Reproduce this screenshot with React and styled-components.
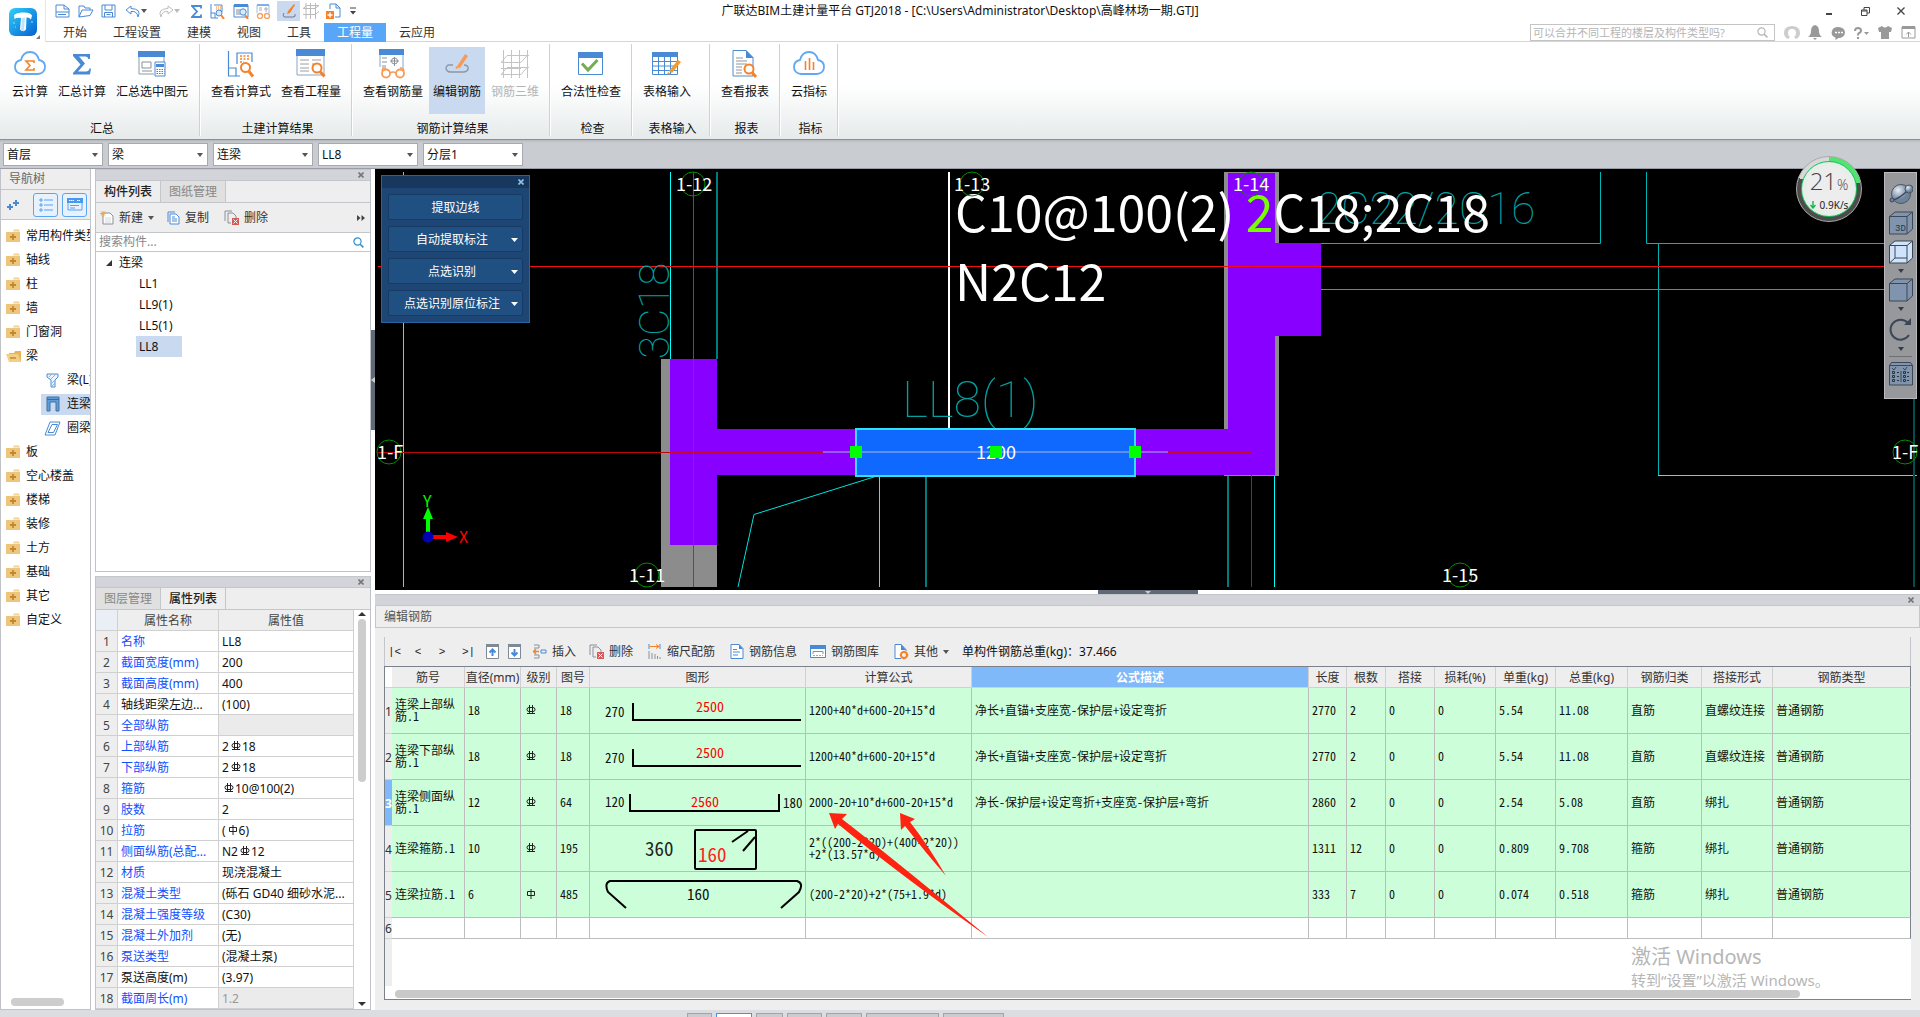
import React from 'react'
import styled, { createGlobalStyle } from 'styled-components'

const GlobalStyle = createGlobalStyle`
  * { box-sizing: border-box; }
  body {
    margin: 0;
    color: #111;
    background: #fff;
    font-family: 'Noto Sans', 'Noto Sans CJK SC', sans-serif;
    font-size: 12px;
    line-height: 20px;
    overflow: hidden;
  }
  button, input, select {
    font: inherit;
    color: inherit;
    margin: 0;
    padding: 0;
    border: 0;
    background: none;
  }
  svg { display: block; flex: none; }
`

const Page = styled.div`
  height: 100vh;
  display: flex;
  flex-direction: column;
`

/* ---------- header ---------- */

const Header = styled.header`
  display: flex;
  height: 42px;
`

const LogoBox = styled.div`
  position: relative;
  width: 46px;
  padding: 8px 0 0 9px;
  border-right: 1px solid #e6e6e6;
`

const LogoCorner = styled.svg`
  position: absolute;
  right: 5px;
  bottom: 3px;
`

const HeaderMain = styled.div`
  flex: 1;
  border-bottom: 1px solid #d4d5d6;
`

const TitleRow = styled.div`
  display: grid;
  grid-template-columns: 1fr auto 1fr;
  align-items: center;
  height: 22px;
`

const QuickBar = styled.div`
  display: flex;
  align-items: center;
  gap: 6px;
  padding-left: 8px;
`

const QuickButton = styled.button`
  display: flex;
  align-items: center;
  justify-content: center;
  width: ${({ $w = 17 }) => $w}px;
  height: 20px;
  background: ${({ $active }) => ($active ? '#c9d9ef' : 'none')};
`

const WindowTitle = styled.div`
  white-space: nowrap;
  padding-right: 46px;
`

const WindowButtons = styled.div`
  display: flex;
  justify-content: flex-end;
  gap: 20px;
  padding-right: 11px;
`

const TabRow = styled.div`
  display: flex;
  justify-content: space-between;
  height: 19px;
  margin-top: 1px;
`

const Tabs = styled.nav`
  display: flex;
  padding-left: 4px;
`

const Tab = styled.button`
  padding: 0 13px;
  line-height: 19px;
  color: ${({ $active }) => ($active ? '#fff' : '#333')};
  background: ${({ $active }) => ($active ? '#58a6f8' : 'none')};
`

const HelpArea = styled.div`
  display: flex;
  align-items: center;
  gap: 7px;
  padding-right: 4px;
`

const HelpSearch = styled.label`
  display: flex;
  align-items: center;
  width: 245px;
  height: 17px;
  padding: 0 6px 0 2px;
  margin-right: 2px;
  border: 1px solid #c4c4c4;
  input {
    flex: 1;
    min-width: 0;
    font-size: 11px;
    line-height: 15px;
    outline: 0;
  }
  input::placeholder { color: #b5b5b5; opacity: 1; }
`

const IconButton = styled.button`
  display: flex;
  align-items: center;
  justify-content: center;
  min-width: 16px;
`

/* ---------- ribbon ---------- */

const Ribbon = styled.div`
  display: flex;
  height: 98px;
  padding-left: 2px;
  background: linear-gradient(#fff 45%, #e6eaeb);
  border-bottom: 1px solid #8a8f93;
`

const Group = styled.section`
  display: flex;
  flex-direction: column;
  min-width: ${({ $min = 0 }) => $min}px;
  margin: 2px 0 3px;
  padding: 3px 6px 0;
  border-right: 1px solid #cfd2d4;
  box-shadow: 1px 0 0 #fff;
  & + & { margin-left: 1px; }
`

const GroupTools = styled.div`
  display: flex;
  gap: 2px;
  flex: 1;
`

const GroupLabel = styled.div`
  padding-left: 3px;
  text-align: center;
  line-height: 15px;
`

const Tool = styled.button`
  display: flex;
  flex-direction: column;
  align-items: center;
  gap: 3px;
  height: 67px;
  padding: 2px 4px 0;
  white-space: nowrap;
  color: ${({ $muted }) => ($muted ? '#b4b4b4' : '#111')};
  background: ${({ $active }) => ($active ? '#c9d9ef' : 'none')};
`

const ComboBar = styled.div`
  display: flex;
  gap: 5px;
  height: 29px;
  padding: 3px 3px 0;
  background: linear-gradient(#b5b8bc, #c9ccd1 3px);
  border-bottom: 1px solid #9a9da5;
`

const Combo = styled.label`
  position: relative;
  width: 100px;
  height: 23px;
  border: 1px solid #a7a9ad;
  background: #fff;
  select {
    width: 100%;
    height: 21px;
    padding-left: 3px;
    appearance: none;
    outline: 0;
  }
  svg {
    position: absolute;
    right: 4px;
    top: 9px;
    pointer-events: none;
  }
`

/* ---------- docks ---------- */

const Main = styled.main`
  flex: 1;
  min-height: 0;
  display: flex;
`

const NavPanel = styled.aside`
  display: flex;
  flex-direction: column;
  width: 91px;
  margin-right: 4px;
  border: 1px solid #bfc2c8;
  border-top: 0;
`

const NavTitle = styled.div`
  height: 21px;
  padding-left: 8px;
  color: #666;
  background: #eee;
  border-bottom: 1px solid #c3c6cb;
`

const NavTools = styled.div`
  display: flex;
  align-items: center;
  gap: 4px;
  height: 30px;
  padding-left: 4px;
  background: #eee;
  border-bottom: 1px solid #c3c6cb;
`

const NavExpand = styled(IconButton)`
  margin-right: 8px;
`

const NavToggle = styled.button`
  display: flex;
  align-items: center;
  justify-content: center;
  width: 25px;
  height: 24px;
  border: 1px solid #5ba5f5;
  border-radius: 3px;
  background: #e8f2fd;
`

const NavList = styled.ul`
  flex: 1;
  margin: 0;
  padding: 4px 0 0;
  list-style: none;
  overflow: hidden;
`

const NavItem = styled.li`
  display: flex;
  align-items: center;
  height: 24px;
  padding-left: ${({ $child }) => ($child ? 40 : 5)}px;
`

const NavButton = styled.button`
  flex: 1;
  display: flex;
  align-items: center;
  gap: ${({ $child }) => ($child ? 6 : 5)}px;
  height: 21px;
  padding-left: ${({ $child }) => ($child ? 3 : 0)}px;
  white-space: nowrap;
  background: ${({ $active }) => ($active ? '#c9d9ef' : 'none')};
`

const NavScroll = styled.div`
  width: 53px;
  height: 8px;
  margin: 0 0 3px 10px;
  border-radius: 4px;
  background: #cdcdcd;
`

const MiddleColumn = styled.div`
  display: flex;
  flex-direction: column;
  gap: 4px;
  width: 276px;
`

const Panel = styled.section`
  flex: ${({ $grow }) => ($grow ? '1 1 0' : 'none')};
  min-height: 0;
  border: 1px solid #bfc2c8;
  border-top: 0;
  background: #fff;
`

const Strip = styled.div`
  display: flex;
  justify-content: flex-end;
  align-items: center;
  height: 12px;
  padding-right: 6px;
  background: #d3d4d9;
  border-top: 1px solid #c3c6cb;
  border-bottom: 1px solid #c3c6cb;
`

const PanelTabs = styled.div`
  display: flex;
  height: 22px;
  background: #eee;
  border-bottom: 1px solid #c3c6cb;
`

const PanelTab = styled.button`
  padding: 0 8px;
  line-height: 21px;
  border-right: 1px solid #c3c6cb;
  color: ${({ $active }) => ($active ? '#222' : '#888')};
  font-weight: ${({ $active }) => ($active ? 500 : 400)};
  background: ${({ $active }) => ($active ? '#eee' : '#e0e0e0')};
`

const PanelTools = styled.div`
  display: flex;
  align-items: center;
  justify-content: space-between;
  height: 30px;
  padding: 0 1px 0 4px;
  background: #eee;
  border-bottom: 1px solid #c3c6cb;
`

const ToolSet = styled.div`
  display: flex;
  align-items: center;
`

const TextButton = styled.button`
  display: flex;
  align-items: center;
  gap: 5px;
  margin-right: ${({ $gap = 15 }) => $gap}px;
  white-space: nowrap;
  color: #333;
`

const SearchRow = styled.label`
  display: flex;
  align-items: center;
  height: 19px;
  padding: 0 6px 0 3px;
  border-bottom: 1px solid #c3c6cb;
  input {
    flex: 1;
    height: 18px;
    outline: 0;
  }
  input::placeholder { color: #888; opacity: 1; }
`

const Tree = styled.ul`
  margin: 0;
  padding: 0;
  list-style: none;
`

const TreeRow = styled.li`
  display: flex;
  align-items: center;
  gap: 7px;
  height: 21px;
  padding-left: ${({ $child }) => ($child ? 40 : 10)}px;
`

const TreeButton = styled.button`
  height: 21px;
  padding: 0 ${({ $child }) => ($child ? 3 : 0)}px;
  min-width: 46px;
  text-align: left;
  background: ${({ $active }) => ($active ? '#c9d9ef' : 'none')};
`

const PropBody = styled.div`
  display: grid;
  grid-template-columns: minmax(0, 1fr) 16px;
`

const PropTable = styled.table`
  width: 100%;
  table-layout: fixed;
  border-collapse: separate;
  border-spacing: 0;
  th, td {
    height: 21px;
    padding: 2px 0 0 3px;
    line-height: 18px;
    border-right: 1px solid #d0d0d0;
    border-bottom: 1px solid #d0d0d0;
    overflow: hidden;
    white-space: nowrap;
    text-overflow: ellipsis;
  }
  th {
    padding-left: 0;
    font-weight: 400;
    color: #444;
    background: #eee;
  }
  thead th:first-child { background: #eaeff6; }
`

const PropName = styled.td`
  color: ${({ $dark }) => ($dark ? '#111' : '#0f50ff')};
`

const PropValue = styled.td`
  color: ${({ $locked }) => ($locked ? '#999' : '#111')};
  background: ${({ $locked }) => ($locked ? '#ebebeb' : '#fff')};
  svg {
    display: inline-block;
    vertical-align: 0;
    margin: 0 1px 0 2px;
  }
`

const VScroll = styled.div`
  display: flex;
  flex-direction: column;
  align-items: center;
  justify-content: space-between;
  padding: 2px 0 3px;
`

const VTrack = styled.div`
  flex: 1;
  margin: 3px 0 0;
`

const VThumb = styled.div`
  width: 8px;
  height: 163px;
  border-radius: 4px;
  background: #cdcdcd;
`

const VSplitter = styled.div`
  display: flex;
  flex-direction: column;
  width: 4px;
  padding-top: 161px;
`

const HSplitter = styled.div`
  display: flex;
  justify-content: center;
  height: 4px;
`

const Handle = styled.div`
  display: flex;
  align-items: center;
  justify-content: center;
  width: ${({ $vertical }) => ($vertical ? 4 : 100)}px;
  height: ${({ $vertical }) => ($vertical ? 100 : 4)}px;
  background: #5f6a76;
`

/* ---------- viewport ---------- */

const Work = styled.div`
  flex: 1;
  min-width: 0;
  display: flex;
  flex-direction: column;
`

const Viewport = styled.div`
  position: relative;
  flex: 421 1 0;
  min-height: 0;
  background: #000;
`

const Drawing = styled.svg`
  width: 100%;
  height: 100%;
  text {
    font-family: 'Noto Sans CJK SC', sans-serif;
  }
  .cad {
    font-family: Roboto, sans-serif;
    font-weight: 100;
  }
`

const FloatPanel = styled.div`
  position: absolute;
  left: 6px;
  top: 6px;
  width: 149px;
  border: 1px solid #2a64a0;
  background: #1d4674;
`

const FloatHead = styled.div`
  display: flex;
  justify-content: flex-end;
  align-items: center;
  height: 12px;
  padding-right: 5px;
  background: #17375c;
`

const FloatBody = styled.div`
  display: flex;
  flex-direction: column;
  gap: 6px;
  padding: 6px;
`

const FloatButton = styled.button`
  display: flex;
  align-items: center;
  height: 26px;
  padding: 1px 4px 0;
  border: 1px solid #163a63;
  border-radius: 2px;
  color: #fff;
  background: #205081;
  span {
    flex: 1;
    white-space: nowrap;
  }
`

const ViewBar = styled.div`
  position: absolute;
  right: 3px;
  top: 3px;
  display: flex;
  flex-direction: column;
  align-items: center;
  width: 33px;
  height: 227px;
  padding-top: 9px;
  gap: 5px;
  background: #96989c;
  border: 1px solid #b9bbbe;
`

const ViewDivider = styled.div`
  width: 23px;
  height: 1px;
  background: #6c6f75;
`

const NetBadge = styled.div`
  position: absolute;
  right: 58px;
  top: -13px;
  width: 66px;
  height: 66px;
  border-radius: 50%;
  padding: 4px;
  border: 1px solid #aaa;
  background: conic-gradient(#52e370 0 78deg, #4c4c4c 78deg 290deg, #d6d8da 290deg);
`

const NetDial = styled.div`
  display: flex;
  flex-direction: column;
  align-items: center;
  height: 56px;
  padding-top: 7px;
  border-radius: 50%;
  border: 1px solid #14c25a;
  background: radial-gradient(#ededed 55%, #c9f3d3);
`

const NetPercent = styled.div`
  color: #444;
  font-family: 'Open Sans', sans-serif;
  font-weight: 300;
  font-size: 24px;
  line-height: 24px;
  small { font-size: 14px; }
`

const NetSpeed = styled.div`
  display: flex;
  align-items: center;
  gap: 4px;
  font-size: 10px;
  line-height: 16px;
  color: #222;
`

/* ---------- rebar editor ---------- */

const Dock = styled.section`
  flex: 416 1 0;
  min-height: 0;
  display: flex;
  flex-direction: column;
  background: #eee;
`

const DockTitle = styled.div`
  height: 22px;
  padding-left: 8px;
  line-height: 21px;
  color: #555;
  border: 1px solid #c3c6cb;
  border-top: 0;
`

const DockBody = styled.div`
  flex: 1;
  min-height: 0;
  display: flex;
  flex-direction: column;
  margin: 9px 9px 10px;
`

const DockTools = styled.div`
  display: flex;
  align-items: center;
  height: 29px;
  padding-left: 3px;
  border-left: 1px solid #c3c6cb;
  border-right: 1px solid #c3c6cb;
`

const StepButton = styled.button`
  width: 12px;
  margin-right: ${({ $gap = 12 }) => $gap}px;
  font-family: 'Liberation Mono', monospace;
  font-size: 11px;
  white-space: nowrap;
  color: #222;
`

const TableFrame = styled.div`
  position: relative;
  flex: 1;
  min-height: 0;
  display: flex;
  flex-direction: column;
  border: 1px solid #7c828c;
  border-right-width: 0;
  background: #fff;
`

const RebarTable = styled.table`
  width: 100%;
  table-layout: fixed;
  border-collapse: separate;
  border-spacing: 0;
  th, td {
    border-right: 1px solid #bdbdbd;
    border-bottom: 1px solid #bdbdbd;
    overflow: hidden;
  }
  tr > :last-child { border-right-color: #7c828c; }
  th {
    height: 21px;
    padding: 2px 0 0;
    font-weight: 400;
    line-height: 18px;
    color: #333;
    white-space: nowrap;
    background: #eee;
    border-color: #d0d0d0;
  }
  th:first-child { border-right: 0; }
  thead th:first-child { background: #fff; }
`

const HeadCell = styled.th`
  && {
    color: ${({ $active }) => ($active ? '#fff' : '#333')};
    font-weight: ${({ $active }) => ($active ? 700 : 400)};
    background: ${({ $active }) => ($active ? '#80b9fa' : '#eee')};
  }
`

const RowHead = styled.th`
  && {
    overflow: visible;
    color: ${({ $active }) => ($active ? '#fff' : '#333')};
    font-weight: ${({ $active }) => ($active ? 700 : 400)};
    background: ${({ $active }) => ($active ? '#80b9fa' : '#eee')};
  }
`

const Cell = styled.td`
  height: ${({ $empty }) => ($empty ? 21 : 46)}px;
  padding: 0 0 ${({ $flush, $empty }) => ($flush || $empty ? 0 : 2)}px ${({ $pad = 3 }) => $pad}px;
  line-height: 12px;
  font-family: 'Noto Sans Mono CJK SC', 'Noto Sans CJK SC', sans-serif;
  white-space: ${({ $wrap }) => ($wrap ? 'pre-line' : 'nowrap')};
  background: ${({ $empty }) => ($empty ? '#fff' : '#ccffd9')};
  svg text { font-family: 'Noto Sans Mono CJK SC', 'Noto Sans CJK SC', sans-serif; }
`

const RowGutter = styled.div`
  flex: 1;
  width: 7px;
  margin-bottom: 4px;
  background: #eee;
`

const HScroll = styled.div`
  height: 8px;
  margin: 0 111px 1px 10px;
  border-radius: 4px;
  background: #c9c9c9;
`

const Marks = styled.svg`
  position: absolute;
  left: 421px;
  top: 133px;
  pointer-events: none;
`

const Watermark = styled.div`
  position: absolute;
  left: 1246px;
  top: 277px;
  color: #b6b6b6;
  white-space: nowrap;
  pointer-events: none;
  strong {
    display: block;
    font-weight: 400;
    font-size: 20px;
    line-height: 26px;
  }
  span {
    font-size: 15px;
    line-height: 20px;
  }
`

const StatusBar = styled.footer`
  display: flex;
  gap: 4px;
  height: 7px;
  padding: 3px 0 0 687px;
  background: #dcdde0;
  overflow: hidden;
`

const StatusButton = styled.button`
  width: ${({ $w }) => $w}px;
  height: 20px;
  border: 1px solid ${({ $active }) => ($active ? '#3a96f5' : '#a2a4a8')};
  background: ${({ $active }) => ($active ? '#fff' : '#cbccd0')};
`

/* ---------- icons ---------- */

const Svg = ({ w, h = w, children }) => (
  <svg width={w} height={h} viewBox={`0 0 ${w} ${h}`} fill='none' aria-hidden='true'>
    {children}
  </svg>
)

const Caret = ({ color = '#555', up, w = 7 }) => (
  <Svg w={w} h={4}>
    <path d={up ? `M0 4h${w}L${w / 2} 0z` : `M0 0h${w}L${w / 2} 4z`} fill={color} />
  </Svg>
)

const CloseIcon = ({ color = '#777' }) => (
  <Svg w={6}><path d='M.5.5l5 5M5.5.5l-5 5' stroke={color} strokeWidth='1.6' /></Svg>
)

const Magnifier = ({ color }) => (
  <Svg w={11}>
    <circle cx='4.5' cy='4.5' r='3.6' stroke={color} strokeWidth='1.2' />
    <path d='M7.2 7.2l3.2 3.2' stroke={color} strokeWidth='1.6' />
  </Svg>
)

const Logo = () => (
  <Svg w={29}>
    <defs>
      <linearGradient id='logo' x1='0' y1='0' x2='1' y2='1'>
        <stop offset='0' stopColor='#2fd0fb' />
        <stop offset='1' stopColor='#075fd0' />
      </linearGradient>
    </defs>
    <rect x='0' y='0' width='28' height='28' rx='6' fill='url(#logo)' />
    <path d='M5 7q3-3 9-2.500q7-.5 9 3l-1 4q-2-2.500-4.500-2l-.5 12q-3 3-6 0l1-11.500q-4-1-6.500 1z' fill='#fff' />
    <path d='M13 10l-1 12 3 1.500 1-14z' fill='#bfe4fb' />
    <path d='M4 15h2M22 14h2M6 19h1' stroke='#8fe2ff' />
  </Svg>
)

const BLUE = '#4a8ad4'
const ORANGE = '#f5822a'

const QuickIcons = {
  file: (
    <Svg w={15} h={14}>
      <path d='M1 1h8l5 4v8H1zM9 1v4h5M1 8h13M3 10.500h8' stroke={BLUE} />
    </Svg>
  ),
  open: (
    <Svg w={16} h={14}>
      <path d='M1 13V2h5l1 2h5v2M1 13L4 6h11l-3 5.500L1 13' stroke={BLUE} />
    </Svg>
  ),
  save: (
    <Svg w={15} h={14}>
      <path d='M1 1h13v12H1zM4 1v5h7V1M3.500 13V8.500h8V13M5.500 10.500h4' stroke={BLUE} />
    </Svg>
  ),
  undo: (
    <Svg w={16} h={13}>
      <path d='M6 1L1 5l5 4V6.500q6-1 7 5.500 4-8-7-8.500z' stroke={BLUE} />
    </Svg>
  ),
  redo: (
    <Svg w={16} h={13}>
      <path d='M10 1l5 4-5 4V6.500q-6-1-7 5.500-4-8 7-8.500z' stroke='#bdbdbd' />
    </Svg>
  ),
  sum: (
    <Svg w={11} h={13}>
      <path d='M10 3.500V1H1l5 5.500L1 12h9V9.500' stroke={BLUE} strokeWidth='1.8' />
    </Svg>
  ),
  formula: (
    <Svg w={15} h={15}>
      <path d='M1 0v14h7M1 9h4v5M4 1h8v7' stroke={BLUE} />
      <path d='M6 3h5M6 5h5' stroke={ORANGE} strokeDasharray='1 1' />
      <circle cx='9' cy='9' r='3' stroke={BLUE} fill='#dbe8f6' />
      <path d='M11 11l3 4' stroke={ORANGE} strokeWidth='2' />
    </Svg>
  ),
  quantity: (
    <Svg w={16} h={15}>
      <path d='M1 1h14v12H1z' stroke={BLUE} />
      <path d='M1 0h14v3H1z' fill={BLUE} />
      <path d='M3 6h4M3 8h3M3 10h4' stroke='#889' />
      <circle cx='10' cy='8' r='3.200' stroke={BLUE} fill='#dbe8f6' />
      <path d='M12 11l3 4' stroke={ORANGE} strokeWidth='2' />
    </Svg>
  ),
  rebar: (
    <Svg w={15} h={15}>
      <path d='M1 9V1h12v8' stroke='#9cc0e8' />
      <path d='M1 0h12v2H1z' fill='#7fb0e6' />
      <path d='M3 4h3M3 6h3M8 5h4M10 3v5' stroke='#aab' />
      <circle cx='4' cy='12' r='2.500' stroke='#f5a468' strokeWidth='1.400' />
      <circle cx='11' cy='12' r='2.500' stroke='#f5a468' strokeWidth='1.400' />
    </Svg>
  ),
  edit: (
    <Svg w={16} h={14}>
      <path d='M3 9q-2 4 1 4h8q3 0 2-3' stroke='#778' />
      <path d='M13 0L7 7l-1 3 3-1 5-8z' fill={ORANGE} />
    </Svg>
  ),
  mesh: (
    <Svg w={16} h={16}>
      <path d='M3 0v16M7.500 0v16M12.500 0v16M0 5.500l4-3h12M0 11.500h12l4-3M0 5.500h12l4-3' stroke='#bbb' />
    </Svg>
  ),
  add: (
    <Svg w={15} h={16}>
      <path d='M4 6V1h6l4 4v9H9M10 1v4h4' stroke={BLUE} />
      <path d='M0 8h8v8H0z' fill={ORANGE} />
      <path d='M4 9.500v5M1.500 12h5' stroke='#fff' strokeWidth='1.400' />
    </Svg>
  )
}

const cloudPath = 'M8 25q-7-1-7-7 0-6 6-7Q9 3 16 3q7 0 9 8 6 1 6 7 0 6-7 7z'

const ToolIcons = {
  cloudSum: (
    <Svg w={32} h={30}>
      <path d={cloudPath} stroke='#62a9f2' strokeWidth='1.800' />
      <path d='M20 14v-2h-8l4 4.500-4 4.500h8v-2' stroke={ORANGE} strokeWidth='1.600' />
    </Svg>
  ),
  sum: (
    <Svg w={20} h={30}>
      <path d='M1 5h17v5h-1.500q-.5-2.500-3-2.500H7l6 7-7 8h8q3 0 3.500-3H19l-1 6H1v-1.500l7.500-8.500L1 7z' fill={BLUE} />
    </Svg>
  ),
  sumPicked: (
    <Svg w={28} h={30}>
      <path d='M1 3h25v10M1 3v22h15' stroke='#8a9ba8' />
      <path d='M0 2h27v6H0z' fill={BLUE} />
      <path d='M4 13h9v6H4zM4 22h10' stroke='#8a8f98' />
      <path d='M17 13h10v14H17z' fill='#fff' stroke={BLUE} />
      <path d='M18 15h8v3h-8z' fill={BLUE} />
      <path d='M18.500 20.500h8M18.500 22.500h8M18.500 24.500h8' stroke='#778' strokeDasharray='1.500 1' />
    </Svg>
  ),
  formula: (
    <Svg w={28} h={30}>
      <path d='M1.500 2v25H13M1.500 19H9v8M10 15V4h15v9' stroke={BLUE} strokeWidth='1.200' />
      <path d='M13 7h9M13 10h9M13 13h4' stroke={ORANGE} strokeWidth='1.500' strokeDasharray='2 1.500' />
      <circle cx='18.500' cy='18.500' r='4.500' stroke={ORANGE} strokeWidth='2' fill='#fff' />
      <path d='M22 22.500l4 5' stroke={ORANGE} strokeWidth='3' />
    </Svg>
  ),
  quantity: (
    <Svg w={30} h={30}>
      <path d='M1 1h27v25H1z' stroke='#8aa5c4' fill='#fff' />
      <path d='M0 0h29v7H0z' fill={BLUE} />
      <path d='M4 11h9M4 15h9M4 19h9M4 22h9M16 11h9M16 15h4' stroke='#9a9fa6' />
      <circle cx='21' cy='19' r='4.500' stroke={ORANGE} strokeWidth='2' fill='#fff' />
      <path d='M24.500 23l4 4.500' stroke={ORANGE} strokeWidth='3' />
    </Svg>
  ),
  rebarView: (
    <Svg w={28} h={30}>
      <path d='M1 18V1h23v17' stroke='#7fa8d6' />
      <path d='M0 0h25v6H0z' fill={BLUE} />
      <path d='M3 9h5M3 13h5M3 17h4M11 12h9M15.500 8v9' stroke='#8a8f98' />
      <ellipse cx='15.500' cy='12' rx='3' ry='3' stroke='#8a8f98' />
      <circle cx='7' cy='24.500' r='4' stroke='#f79a55' strokeWidth='1.800' />
      <circle cx='21' cy='24.500' r='4' stroke='#f79a55' strokeWidth='1.800' />
      <path d='M11 24q3-2 6 0M3 22l1-3h3M25 22l-1-3h-3' stroke='#f79a55' strokeWidth='1.400' />
    </Svg>
  ),
  edit: (
    <Svg w={26} h={30}>
      <path d='M9 16H4q-4 3 0 6.500 1 .5 3 .5h13q5-1 4-5-1-2-4-2' stroke='#8d96a5' strokeWidth='1.400' />
      <path d='M21 5l3 2-8 12-3-1.500zM12 17l3 2-3.500 1z' fill='#f79a55' />
    </Svg>
  ),
  mesh: (
    <Svg w={28} h={30}>
      <path d='M2.500 1v28M10.500 1v28M18.500 1v28M26.500 1v28M0 13.500l6-7h22M0 13.500h20l6-7M0 25.500l6-7h22M0 25.500h20l6-7M0 19.500h20' stroke='#c4c4c4' />
    </Svg>
  ),
  check: (
    <Svg w={26} h={30}>
      <path d='M.5 4h24v21.500H.5z' stroke={BLUE} fill='#fff' />
      <path d='M0 3h25v6H0z' fill={BLUE} />
      <path d='M4 14.500l6 6.500 9.500-10' stroke='#76ac52' strokeWidth='3' />
    </Svg>
  ),
  table: (
    <Svg w={30} h={30}>
      <path d='M.5 4h25v21.500H.5z' stroke={BLUE} fill='#fff' />
      <path d='M0 3h26v5H0z' fill={BLUE} />
      <path d='M1 12.500h24M1 17h24M1 21.500h24M6.500 8v17M12.500 8v17M18.500 8v17' stroke={BLUE} />
      <path d='M26 11l3 2-9 11-3-2zM16 23l3 2-4 .5z' fill='#f29a2e' />
    </Svg>
  ),
  report: (
    <Svg w={26} h={30}>
      <path d='M1 1.500h13l7 7V27H1z' stroke={BLUE} fill='#fff' />
      <path d='M14 1l7.500 8H14z' fill={BLUE} />
      <path d='M4 9h7M4 12h11M4 15h11M4 18h6M4 21h6M4 24h6' stroke='#90959c' />
      <circle cx='17' cy='20' r='4.500' stroke={ORANGE} strokeWidth='2' fill='#fff' />
      <path d='M20.500 24l3.500 4' stroke={ORANGE} strokeWidth='3' />
    </Svg>
  ),
  cloudChart: (
    <Svg w={32} h={30}>
      <path d={cloudPath} stroke='#62a9f2' strokeWidth='1.800' />
      <path d='M12.500 12v9M16.500 9v12M20.500 13v8' stroke={ORANGE} strokeWidth='1.600' />
    </Svg>
  )
}

const FolderIcon = ({ open }) => (
  <Svg w={15} h={14}>
    {open ? (
      <>
        <path d='M3 4h5l1-2h6v11H3z' fill='#e8b457' />
        <path d='M0 5h12l3 8H3z' fill='#f3cf86' />
        <path d='M4 9h6' stroke='#c08a2c' strokeWidth='1.500' />
      </>
    ) : (
      <>
        <path d='M0 3h14v10H0z' fill='#eec57c' />
        <path d='M7 2.500l1-2h5l1 2z' fill='#f0d296' />
        <path d='M4 8h6M7 5v6' stroke='#c08a2c' strokeWidth='1.800' />
      </>
    )}
  </Svg>
)

const BeamIcons = {
  beam: (
    <Svg w={17} h={16}>
      <path d='M3 2h11v3l-3 3v7H7V8L3 5z' stroke={BLUE} fill='#edf4fb' />
      <path d='M5 5l3-3M7 7l5-5M8 11l3-3M8 14l3-3' stroke='#8ab6e4' />
    </Svg>
  ),
  link: (
    <Svg w={17} h={16}>
      <path d='M3 1h12v14h-3V6H6v9H3z' fill='#5e9cdc' stroke='#44719f' />
      <path d='M3 3.500h12' stroke='#2f6cae' />
    </Svg>
  ),
  ring: (
    <Svg w={17} h={16}>
      <path d='M6 2h10l-5 13H1zM8 4.500L4 12.500h5.500l4-8z' stroke={BLUE} />
    </Svg>
  )
}

const NewIcon = () => (
  <Svg w={14}>
    <path d='M3 2h7l3 3v8H3z' stroke='#8a8f98' fill='#fff' />
    <path d='M0 2.500h6M3 0v6M1 .5l4 4M5 .5l-4 4' stroke='#f5a04a' />
    <path d='M5 7h6M5 9h6M5 11h6' stroke='#d5d8dc' />
  </Svg>
)

const CopyIcon = () => (
  <Svg w={13} h={14}>
    <path d='M1 11V1h7' stroke={BLUE} />
    <path d='M3 3h6l3 3v7H3z' stroke={BLUE} fill='#fff' />
    <path d='M5 6h3M5 8h5M5 10h5' stroke={BLUE} />
  </Svg>
)

const DeleteIcon = () => (
  <Svg w={15} h={15}>
    <path d='M1 11V1h7M4 13V3h5l3 3v2M4 13h3' stroke='#8a9098' />
    <path d='M8 8h7v7H8z' fill='#d65a5a' />
    <path d='M9.500 9.500l4 4M13.500 9.500l-4 4' stroke='#fff' />
  </Svg>
)

// steel grade marks: one bar for plain, two bars and a base for ribbed
const Grade = ({ plain }) => (
  <Svg w={10}>
    {plain
      ? <path d='M1.500 2.500h7v4h-7zM5 0v10' stroke='#222' />
      : <path d='M3 6.500Q1 6.500 1 4.500t2-2h4q2 0 2 2t-2 2zM3.500 0v9M6.500 0v9M1 8.500h8' stroke='#222' />}
  </Svg>
)

const Cube = ({ light, label }) => (
  <Svg w={24} h={24}>
    <path d='M.5 5.500L6 1h17.500v17L18 23H.5z' fill={light ? '#cfe4fa' : '#8095ad'} stroke='#3c4654' />
    <path d='M.5 5.500H18V23M18 5.500L23.500 1' stroke='#3c4654' />
    {light && <path d='M6 5.500V18h12M6 18l-5.500 5' stroke='#3c4654' />}
    {label && <text x='6' y='20' fontSize='9' fill='#2c3440' fontFamily='Liberation Mono'>{label}</text>}
  </Svg>
)

/* ---------- data ---------- */

const tabs = ['开始', '工程设置', '建模', '视图', '工具', '工程量', '云应用']

const ribbonGroups = [
  { label: '汇总', min: 198, tools: [['云计算', 'cloudSum'], ['汇总计算', 'sum'], ['汇总选中图元', 'sumPicked']] },
  { label: '土建计算结果', tools: [['查看计算式', 'formula'], ['查看工程量', 'quantity']] },
  { label: '钢筋计算结果', tools: [['查看钢筋量', 'rebarView'], ['编辑钢筋', 'edit', 'active'], ['钢筋三维', 'mesh', 'muted']] },
  { label: '检查', tools: [['合法性检查', 'check']] },
  { label: '表格输入', min: 77, tools: [['表格输入', 'table']] },
  { label: '报表', tools: [['查看报表', 'report']] },
  { label: '指标', tools: [['云指标', 'cloudChart']] }
]

const combos = [['楼层', '首层'], ['类别', '梁'], ['类型', '连梁'], ['构件', 'LL8'], ['分层', '分层1']]

const navItems = [
  ['常用构件类型'], ['轴线'], ['柱'], ['墙'], ['门窗洞'], ['梁', 'open'],
  ['梁(L)', 'beam'], ['连梁', 'link'], ['圈梁', 'ring'],
  ['板'], ['空心楼盖'], ['楼梯'], ['装修'], ['土方'], ['基础'], ['其它'], ['自定义']
]

const properties = [
  ['名称', 'LL8'],
  ['截面宽度(mm)', '200'],
  ['截面高度(mm)', '400'],
  ['轴线距梁左边...', '(100)', 'dark'],
  ['全部纵筋', '', 'locked'],
  ['上部纵筋', <>2<Grade />18</>],
  ['下部纵筋', <>2<Grade />18</>],
  ['箍筋', <><Grade />10@100(2)</>],
  ['肢数', '2'],
  ['拉筋', <>(<Grade plain />6)</>],
  ['侧面纵筋(总配...', <>N2<Grade />12</>],
  ['材质', '现浇混凝土'],
  ['混凝土类型', '(砾石 GD40 细砂水泥...'],
  ['混凝土强度等级', '(C30)'],
  ['混凝土外加剂', '(无)'],
  ['泵送类型', '(混凝土泵)'],
  ['泵送高度(m)', '(3.97)', 'dark'],
  ['截面周长(m)', '1.2', 'locked']
]

const columns = [
  ['筋号', 73], ['直径(mm)', 56], ['级别', 36], ['图号', 33], ['图形', 216], ['计算公式', 166],
  ['公式描述'], ['长度', 38], ['根数', 39], ['搭接', 49], ['损耗(%)', 61], ['单重(kg)', 60],
  ['总重(kg)', 72], ['钢筋归类', 74], ['搭接形式', 71], ['钢筋类型', 138]
]

const LShape = () => (
  <Svg w={215} h={45}>
    <path d='M43 15v17h168' stroke='#000' strokeWidth='2' />
    <text x='15' y='29' fontSize='13' fill='#111'>270</text>
    <text x='106' y='24' fontSize='14' fill='#f00'>2500</text>
  </Svg>
)

const UShape = () => (
  <Svg w={215} h={45}>
    <path d='M40 14v17h149V14' stroke='#000' strokeWidth='2' />
    <text x='15' y='27' fontSize='13' fill='#111'>120</text>
    <text x='101' y='27' fontSize='14' fill='#f00'>2560</text>
    <text x='193' y='28' fontSize='13' fill='#111'>180</text>
  </Svg>
)

const Stirrup = () => (
  <Svg w={215} h={45}>
    <rect x='105' y='4' width='61' height='39' rx='1' stroke='#000' strokeWidth='2' />
    <path d='M142 16l16-11M153 25l12-14' stroke='#000' strokeWidth='2' />
    <text x='55' y='30' fontSize='19' fill='#222'>360</text>
    <text x='108' y='36' fontSize='19' fill='#f22'>160</text>
  </Svg>
)

const Tie = () => (
  <Svg w={215} h={45}>
    <path d='M36 36L18 20q-4-9 2-11h187q7 2 2 11L191 36' stroke='#000' strokeWidth='2' />
    <text x='97' y='28' fontSize='15' fill='#111'>160</text>
  </Svg>
)

const rebars = [
  ['连梁上部纵\n筋.1', '18', <Grade />, '18', <LShape />, '1200+40*d+600-20+15*d', '净长+直锚+支座宽-保护层+设定弯折', '2770', '2', '0', '0', '5.54', '11.08', '直筋', '直螺纹连接', '普通钢筋'],
  ['连梁下部纵\n筋.1', '18', <Grade />, '18', <LShape />, '1200+40*d+600-20+15*d', '净长+直锚+支座宽-保护层+设定弯折', '2770', '2', '0', '0', '5.54', '11.08', '直筋', '直螺纹连接', '普通钢筋'],
  ['连梁侧面纵\n筋.1', '12', <Grade />, '64', <UShape />, '2000-20+10*d+600-20+15*d', '净长-保护层+设定弯折+支座宽-保护层+弯折', '2860', '2', '0', '0', '2.54', '5.08', '直筋', '绑扎', '普通钢筋'],
  ['连梁箍筋.1', '10', <Grade />, '195', <Stirrup />, '2*((200-2*20)+(400-2*20))\n+2*(13.57*d)', '', '1311', '12', '0', '0', '0.809', '9.708', '箍筋', '绑扎', '普通钢筋'],
  ['连梁拉筋.1', '6', <Grade plain />, '485', <Tie />, '(200-2*20)+2*(75+1.9*d)', '', '333', '7', '0', '0', '0.074', '0.518', '箍筋', '绑扎', '普通钢筋']
]

const cellPad = (i) => (i === 4 ? 0 : i === 2 ? 5 : 3)

const axes = [
  ['1-12', 693, 184, 676], ['1-13', 972, 184, 954], ['1-14', 1251, 184, 1233],
  ['1-11', 647, 575, 629], ['1-15', 1460, 575, 1442], ['1-F', 389, 452, 377], ['1-F', 1905, 452, 1892]
]

/* ---------- sections ---------- */

const TopHeader = () => (
  <Header>
    <LogoBox>
      <Logo />
      <LogoCorner width='4' height='4'><path d='M4 0v4H0z' fill='#777' /></LogoCorner>
    </LogoBox>
    <HeaderMain>
      <TitleRow>
        <QuickBar>
          <QuickButton aria-label='新建'>{QuickIcons.file}</QuickButton>
          <QuickButton aria-label='打开'>{QuickIcons.open}</QuickButton>
          <QuickButton aria-label='保存'>{QuickIcons.save}</QuickButton>
          <QuickButton aria-label='撤销' $w={26}>{QuickIcons.undo}<Caret w={6} /></QuickButton>
          <QuickButton aria-label='恢复' $w={28}>{QuickIcons.redo}<Caret w={6} color='#bbb' /></QuickButton>
          <QuickButton aria-label='汇总计算' $w={14}>{QuickIcons.sum}</QuickButton>
          <QuickButton aria-label='查看计算式'>{QuickIcons.formula}</QuickButton>
          <QuickButton aria-label='查看工程量'>{QuickIcons.quantity}</QuickButton>
          <QuickButton aria-label='查看钢筋量' $w={16}>{QuickIcons.rebar}</QuickButton>
          <QuickButton aria-label='编辑钢筋' $active $w={23}>{QuickIcons.edit}</QuickButton>
          <QuickButton aria-label='钢筋三维' $w={10}>{QuickIcons.mesh}</QuickButton>
          <QuickButton aria-label='添加' $w={22}>{QuickIcons.add}</QuickButton>
          <QuickButton aria-label='更多' $w={6}>
            <Svg w={6} h={8}><path d='M0 1h6' stroke='#444' /><path d='M0 4h6L3 7.500z' fill='#444' /></Svg>
          </QuickButton>
        </QuickBar>
        <WindowTitle>广联达BIM土建计量平台 GTJ2018 - [C:\Users\Administrator\Desktop\高峰林场一期.GTJ]</WindowTitle>
        <WindowButtons>
          <IconButton aria-label='最小化'><Svg w={8}><path d='M1 7h6' stroke='#444' strokeWidth='2' /></Svg></IconButton>
          <IconButton aria-label='还原'>
            <Svg w={9}><path d='M3 3V.5h5.500V6H6M.5 3H6v5.500H.5zM.5 4H6' stroke='#444' /></Svg>
          </IconButton>
          <IconButton aria-label='关闭'><Svg w={8}><path d='M.5.5l7 7M7.500.5l-7 7' stroke='#444' strokeWidth='1.300' /></Svg></IconButton>
        </WindowButtons>
      </TitleRow>
      <TabRow>
        <Tabs>
          {tabs.map((name) => (
            <Tab key={name} $active={name === '工程量'}>{name}</Tab>
          ))}
        </Tabs>
        <HelpArea>
          <HelpSearch>
            <input aria-label='帮助搜索' placeholder='可以合并不同工程的楼层及构件类型吗?' />
            <Magnifier color='#b5b5b5' />
          </HelpSearch>
          <IconButton aria-label='用户'>
            <Svg w={16}>
              <path d='M4 14Q0 12 0 8q0-7 8-7t8 7q0 4-4 6l-2-2q2-1 2-4 0-4-4-4T4 8q0 3 2 4z' fill='#cdcdcd' />
            </Svg>
          </IconButton>
          <IconButton aria-label='通知'>
            <Svg w={14} h={15}><path d='M7 0q4 1 4 6 0 4 3 6H0q3-2 3-6 0-5 4-6zM5 13h4l-2 2z' fill='#999' /></Svg>
          </IconButton>
          <IconButton aria-label='消息'>
            <Svg w={15} h={14}>
              <path d='M7.500 1a6.500 5.500 0 010 11l-3 2v-2.500A6.500 5.500 0 017.500 1z' fill='#999' />
              <path d='M4 6.500h2M7 6.500h2M10 6.500h2' stroke='#fff' strokeWidth='1.500' />
            </Svg>
          </IconButton>
          <IconButton aria-label='帮助'>
            <Svg w={17} h={14}>
              <path d='M2 5q0-3 3-3t3 2.500q0 2-2 2.500-1 .5-1 2.500M5 11v2' stroke='#999' strokeWidth='2' />
              <path d='M11 6h5l-2.500 3z' fill='#999' />
            </Svg>
          </IconButton>
          <IconButton aria-label='皮肤'>
            <Svg w={14} h={13}><path d='M0 2l4-2q3 3 6 0l4 2-1 4h-2v7H3V6H1z' fill='#999' /></Svg>
          </IconButton>
          <IconButton aria-label='折叠'>
            <Svg w={15} h={13}>
              <path d='M1 1h13v11H1z' stroke='#999' /><path d='M1 0h13v3H1z' fill='#999' />
              <path d='M7.500 11V6M5 8.500L7.500 6 10 8.500' stroke='#999' />
            </Svg>
          </IconButton>
        </HelpArea>
      </TabRow>
    </HeaderMain>
  </Header>
)

const Navigator = () => (
  <NavPanel>
    <NavTitle>导航树</NavTitle>
    <NavTools>
      <NavExpand aria-label='展开'>
        <Svg w={14} h={12}><path d='M1 8h6M4 5v6M7 4h6M10 1v6' stroke={BLUE} strokeWidth='2' /></Svg>
      </NavExpand>
      <NavToggle aria-label='列表'>
        <Svg w={14} h={14}>
          <path d='M1 1h2v2H1zM1 6h2v2H1zM1 11h2v2H1zM5 2h9M5 7h9M5 12h9' stroke='#58a0ee' />
        </Svg>
      </NavToggle>
      <NavToggle aria-label='窗口'>
        <Svg w={16} h={13}>
          <path d='M1 1h14v11H1zM3 7.500h9M3 10h5' stroke='#58a0ee' />
          <path d='M0 0h16v5H0z' fill='#4a98ee' />
          <path d='M2 2.500h5M10 2.500h3' stroke='#fff' strokeDasharray='1.500 .5' />
        </Svg>
      </NavToggle>
    </NavTools>
    <NavList>
      {navItems.map(([name, kind]) => {
        const child = kind in BeamIcons
        return (
          <NavItem key={name} $child={child}>
            <NavButton $child={child} $active={kind === 'link'}>
              {child ? BeamIcons[kind] : <FolderIcon open={kind === 'open'} />}
              {name}
            </NavButton>
          </NavItem>
        )
      })}
    </NavList>
    <NavScroll />
  </NavPanel>
)

const ComponentPanel = () => (
  <Panel $grow>
    <Strip><CloseIcon /></Strip>
    <PanelTabs>
      <PanelTab $active>构件列表</PanelTab>
      <PanelTab>图纸管理</PanelTab>
    </PanelTabs>
    <PanelTools>
      <ToolSet>
        <TextButton $gap={13}><NewIcon />新建<Caret w={6} /></TextButton>
        <TextButton><CopyIcon />复制</TextButton>
        <TextButton><DeleteIcon />删除</TextButton>
      </ToolSet>
      <IconButton aria-label='更多'>
        <Svg w={8} h={6}><path d='M0 0l3.500 3L0 6zM4.500 0L8 3 4.500 6z' fill='#444' /></Svg>
      </IconButton>
    </PanelTools>
    <SearchRow>
      <input aria-label='搜索构件' placeholder='搜索构件...' />
      <Magnifier color='#2e8fd0' />
    </SearchRow>
    <Tree>
      <TreeRow>
        <Svg w={6}><path d='M6 0v6H0z' fill='#333' /></Svg>
        <TreeButton>连梁</TreeButton>
      </TreeRow>
      {['LL1', 'LL9(1)', 'LL5(1)', 'LL8'].map((name) => (
        <TreeRow key={name} $child>
          <TreeButton $child $active={name === 'LL8'}>{name}</TreeButton>
        </TreeRow>
      ))}
    </Tree>
  </Panel>
)

const PropertyPanel = () => (
  <Panel>
    <Strip><CloseIcon /></Strip>
    <PanelTabs>
      <PanelTab>图层管理</PanelTab>
      <PanelTab $active>属性列表</PanelTab>
    </PanelTabs>
    <PropBody>
      <PropTable>
        <colgroup><col width='22' /><col width='101' /><col /></colgroup>
        <thead>
          <tr><th /><th>属性名称</th><th>属性值</th></tr>
        </thead>
        <tbody>
          {properties.map(([name, value, mode], i) => (
            <tr key={name}>
              <th>{i + 1}</th>
              <PropName $dark={mode === 'dark'}>{name}</PropName>
              <PropValue $locked={mode === 'locked'}>{value}</PropValue>
            </tr>
          ))}
        </tbody>
      </PropTable>
      <VScroll>
        <Caret up w={8} color='#333' />
        <VTrack><VThumb /></VTrack>
        <Caret w={8} color='#333' />
      </VScroll>
    </PropBody>
  </Panel>
)

const PlanDrawing = () => (
  <Drawing viewBox='375 169 1545 421' preserveAspectRatio='xMinYMin slice' fill='none'>
    <g stroke='#00b4b4' strokeWidth='1'>
      <path d='M1321 243.500H1600.500V172M1321 289.500H1884M1646.500 172V243.500H1884M1658.500 243V475' />
      <path d='M754 514.500L877 476M754 514.500L738 587' stroke='#00e0e0' />
      <path d='M403.500 172V587M670.500 172V359M879.500 476V587M1274.500 476V587M1658 475.500H1917' stroke='#0ff' />
    </g>
    <path d='M717 172V359M926 476V587M1228 476V587' stroke='#007c7c' strokeWidth='2' />
    <path d='M1914 399V587' stroke='#004f4f' strokeWidth='2' />
    <path d='M949 172V428' stroke='#fff' strokeWidth='2' />

    <path d='M661 359H717V587H661zM1224 172H1279V243H1275V336H1279V476H1224z' fill='#8c8c8c' />
    <path d='M670 359H717V429H856V475H717V545H670z' fill='#80f' />
    <path d='M1228 173H1275V243H1321V336H1275V475H1136V429H1228z' fill='#80f' />
    <path d='M378 266.500H1884M693.500 172V587' stroke='#f01010' />
    <path d='M378 452.500H670' stroke='#b80808' />
    <path d='M670 452.500H823M1168 452.500H1251M1251.500 172V587' stroke='#c80828' />
    <rect x='856' y='429' width='279' height='47' fill='#1069ff' stroke='#2fe0ff' strokeWidth='2' />
    <path d='M823 452H1168' stroke='#a9b4f0' />

    <g fill='#00a0a0'>
      <text className='cad' transform='translate(669 359) rotate(-90)' fontSize='42'>3C18</text>
      <text className='cad' x='902' y='417' fontSize='50'>LL8(1)</text>
      <text className='cad' x='1317' y='224' fontSize='44'>2C22/2C16</text>
    </g>

    <text x='955' y='232' fontSize='50' fill='#fff' xmlSpace='preserve'>
      C10@100(2) <tspan fill='#77ff00'>2</tspan>C18;2C18
    </text>
    <text x='955' y='301' fontSize='50' fill='#fff'>N2C12</text>

    {axes.map(([name, cx, cy, x]) => (
      <g key={name + cx}>
        <circle cx={cx} cy={cy} r='12' stroke='#009000' />
        <text x={x} y={cy + 7} fontSize='18' fill='#fff'>{name}</text>
      </g>
    ))}
    <text x='976' y='459' fontSize='18' fill='#fff'>1200</text>
    <path d='M850 446h12v12h-12zM990 446h12v12h-12zM1129 446h12v12h-12z' fill='#0f0' />

    <path d='M428 532V512' stroke='#0f0' strokeWidth='4' />
    <path d='M423 519l5-12 5 12z' fill='#0f0' />
    <path d='M433 537h16' stroke='#f00' strokeWidth='4' />
    <path d='M446 532l12 5-12 5z' fill='#f00' />
    <circle cx='428' cy='537' r='5.500' fill='#0000b4' />
    <text x='423' y='507' fontSize='16' fill='#0f0'>Y</text>
    <text x='459' y='543' fontSize='16' fill='#f00'>X</text>
  </Drawing>
)

const PlanView = () => (
  <Viewport>
    <PlanDrawing />
    <FloatPanel>
      <FloatHead><CloseIcon color='#8fc0ea' /></FloatHead>
      <FloatBody>
        <FloatButton><span>提取边线</span></FloatButton>
        {['自动提取标注', '点选识别', '点选识别原位标注'].map((name) => (
          <FloatButton key={name}><span>{name}</span><Caret color='#fff' /></FloatButton>
        ))}
      </FloatBody>
    </FloatPanel>
    <NetBadge>
      <NetDial>
        <NetPercent>21<small>%</small></NetPercent>
        <NetSpeed>
          <Svg w={6} h={8}><path d='M3 0v6M.5 4L3 7l2.500-3' stroke='#14b450' strokeWidth='1.400' /></Svg>
          0.9K/s
        </NetSpeed>
      </NetDial>
    </NetBadge>
    <ViewBar>
      <IconButton aria-label='动态观察'>
        <Svg w={24} h={24}>
          <defs>
            <radialGradient id='ball' cx='.35' cy='.3'>
              <stop offset='0' stopColor='#e8eef5' />
              <stop offset='1' stopColor='#6d839d' />
            </radialGradient>
          </defs>
          <circle cx='12' cy='12' r='9.500' fill='url(#ball)' stroke='#4a5564' />
          <path d='M1 18q8 1 20-12' stroke='#3c4654' strokeWidth='1.200' />
          <circle cx='20' cy='7' r='4' fill='url(#ball)' stroke='#4a5564' />
          <circle cx='3' cy='18' r='2' fill='#6d839d' stroke='#3c4654' />
        </Svg>
      </IconButton>
      <IconButton aria-label='三维'><Cube label='3D' /></IconButton>
      <IconButton aria-label='俯视'><Cube light /></IconButton>
      <Caret color='#333c48' w={6} />
      <IconButton aria-label='实体'><Cube /></IconButton>
      <Caret color='#333c48' w={6} />
      <IconButton aria-label='旋转'>
        <Svg w={24} h={26}>
          <path d='M20 19a10 10 0 11-1-12' stroke='#3c4654' strokeWidth='2' />
          <path d='M22 2v7h-7z' fill='#3c4654' />
        </Svg>
      </IconButton>
      <Caret color='#333c48' w={6} />
      <ViewDivider />
      <IconButton aria-label='显示设置'>
        <Svg w={24} h={24}>
          <path d='M.5 3.500l2-3h19l2 3V23H.5z' fill='#8095ad' stroke='#3c4654' />
          <path d='M.5 3.500h23M12 9v11M3 6l2 2 2-3M14 6l2 2 2-3' stroke='#3c4654' />
          <path d='M3.500 9.500h2v2h-2zM3.500 13.500h2v2h-2zM3.500 17.500h2v2h-2zM14.500 9.500h2v2h-2zM14.500 13.500h2v2h-2zM14.500 17.500h2v2h-2zM8 10.500h2M8 14.500h2M8 18.500h2M18 10.500h2M18 14.500h2M18 18.500h2' stroke='#2c3440' />
        </Svg>
      </IconButton>
    </ViewBar>
  </Viewport>
)

const RebarEditor = () => (
  <Dock>
    <Strip><CloseIcon /></Strip>
    <DockTitle>编辑钢筋</DockTitle>
    <DockBody>
      <DockTools>
        <StepButton>|&lt;</StepButton>
        <StepButton>&lt;</StepButton>
        <StepButton $gap={14}>&gt;</StepButton>
        <StepButton>&gt;|</StepButton>
        <TextButton $gap={9} aria-label='上移'>
          <Svg w={13} h={15}>
            <path d='M.5.5h12v14H.5z' stroke='#7e8a96' fill='#fff' /><path d='M0 0h13v3H0z' fill='#7e8a96' />
            <path d='M6.500 12V6M3.500 8.500l3-3 3 3' stroke={BLUE} strokeWidth='2' />
          </Svg>
        </TextButton>
        <TextButton $gap={12} aria-label='下移'>
          <Svg w={13} h={15}>
            <path d='M.5.5h12v14H.5z' stroke='#7e8a96' fill='#fff' /><path d='M0 0h13v3H0z' fill='#7e8a96' />
            <path d='M6.500 5v6M3.500 8.500l3 3 3-3' stroke={BLUE} strokeWidth='2' />
          </Svg>
        </TextButton>
        <TextButton $gap={13}>
          <Svg w={14} h={15}>
            <path d='M1 1h5v3H1M1 11h5v3H1' stroke='#8a9098' />
            <path d='M0 7.500h6M3 5L.5 7.500 3 10' stroke={ORANGE} strokeWidth='1.500' />
            <path d='M8 6h5v3H8z' stroke={BLUE} />
          </Svg>
          插入
        </TextButton>
        <TextButton><DeleteIcon />删除</TextButton>
        <TextButton>
          <Svg w={14} h={15}>
            <path d='M1 0v5M12 0v5' stroke={BLUE} /><path d='M2 2.500h9M8 .5l3 2-3 2' stroke={ORANGE} />
            <path d='M1 7v8M4 9v6M7 10v5M9.500 12v3M12 13v2' stroke='#8a9098' />
          </Svg>
          缩尺配筋
        </TextButton>
        <TextButton $gap={13}>
          <Svg w={14} h={15}>
            <path d='M1 .5h8l4 4v10H1z' stroke={BLUE} fill='#fff' /><path d='M9 0l4 5H9z' fill={BLUE} />
            <path d='M3 5.500h4M3 8h7M3 11h5' stroke={BLUE} />
          </Svg>
          钢筋信息
        </TextButton>
        <TextButton>
          <Svg w={16} h={14}>
            <path d='M.5.5h15v12H.5z' stroke={BLUE} fill='#fff' /><path d='M0 0h16v4H0z' fill={BLUE} />
            <path d='M3 9V6.500h10V9' stroke='#8a9098' /><path d='M3 10.500h10' stroke='#e0a040' strokeDasharray='2 1' />
          </Svg>
          钢筋图库
        </TextButton>
        <TextButton $gap={13}>
          <Svg w={15} h={16}>
            <path d='M7 14.500H1V.5h6l5 5V7' stroke={BLUE} fill='#fff' /><path d='M7 0l5 6H7z' fill={BLUE} />
            <circle cx='10' cy='11' r='3' stroke={ORANGE} strokeWidth='2' />
            <path d='M10 6.500v2M10 13.500v2M5.500 11h2M12.500 11h2M7 8l1 1M13 8l-1 1M7 14l1-1M13 14l-1-1' stroke={ORANGE} />
          </Svg>
          其他<Caret w={6} />
        </TextButton>
        <span>单构件钢筋总重(kg)：37.466</span>
      </DockTools>
      <TableFrame>
        <RebarTable>
          <colgroup>
            <col width='7' />
            {columns.map(([name, width]) => <col key={name} width={width} />)}
          </colgroup>
          <thead>
            <tr>
              <th />
              {columns.map(([name]) => <HeadCell key={name} $active={name === '公式描述'}>{name}</HeadCell>)}
            </tr>
          </thead>
          <tbody>
            {rebars.map((row, r) => (
              <tr key={row[0]}>
                <RowHead $active={r === 2}>{r + 1}</RowHead>
                {row.map((value, i) => (
                  <Cell key={columns[i][0]} $pad={cellPad(i)} $flush={i === 4} $wrap={i === 0 || i === 5}>{value}</Cell>
                ))}
              </tr>
            ))}
            <tr>
              <RowHead>6</RowHead>
              {columns.map(([name]) => <Cell key={name} $empty />)}
            </tr>
          </tbody>
        </RebarTable>
        <RowGutter />
        <HScroll />
        <Watermark>
          <strong>激活 Windows</strong>
          <span>转到“设置”以激活 Windows。</span>
        </Watermark>
        <Marks width='190' height='140' viewBox='806 800 190 140' fill='#ff2312'>
          <path d='M829 813l18 1-5 5Q890 856 988 937Q900 875 838 824l-3 5z' />
          <path d='M900 813l15 6-5 3Q928 845 946 876Q925 852 905 826l-4 4z' />
        </Marks>
      </TableFrame>
    </DockBody>
  </Dock>
)

const App = () => (
  <Page>
    <GlobalStyle />
    <TopHeader />
    <Ribbon>
      {ribbonGroups.map(({ label, tools, min }) => (
        <Group key={label} $min={min}>
          <GroupTools>
            {tools.map(([name, icon, state]) => (
              <Tool key={name} $active={state === 'active'} $muted={state === 'muted'}>
                {ToolIcons[icon]}
                {name}
              </Tool>
            ))}
          </GroupTools>
          <GroupLabel>{label}</GroupLabel>
        </Group>
      ))}
    </Ribbon>
    <ComboBar>
      {combos.map(([name, value]) => (
        <Combo key={name}>
          <select aria-label={name}><option>{value}</option></select>
          <Caret w={6} />
        </Combo>
      ))}
    </ComboBar>
    <Main>
      <Navigator />
      <MiddleColumn>
        <ComponentPanel />
        <PropertyPanel />
      </MiddleColumn>
      <VSplitter>
        <Handle $vertical><Svg w={4} h={6}><path d='M4 0v6L0 3z' fill='#ccc' /></Svg></Handle>
      </VSplitter>
      <Work>
        <PlanView />
        <HSplitter>
          <Handle><Svg w={6} h={3}><path d='M0 0h6L3 3z' fill='#ccc' /></Svg></Handle>
        </HSplitter>
        <RebarEditor />
      </Work>
    </Main>
    <StatusBar>
      <StatusButton aria-label='捕捉' $w={25} />
      <StatusButton aria-label='正交' $w={36} $active />
      <StatusButton aria-label='交点' $w={27} />
      <StatusButton aria-label='垂点' $w={35} />
      <StatusButton aria-label='中点' $w={36} />
      <StatusButton aria-label='顶点' $w={73} />
      <StatusButton aria-label='坐标' $w={61} />
    </StatusBar>
  </Page>
)

export default App
